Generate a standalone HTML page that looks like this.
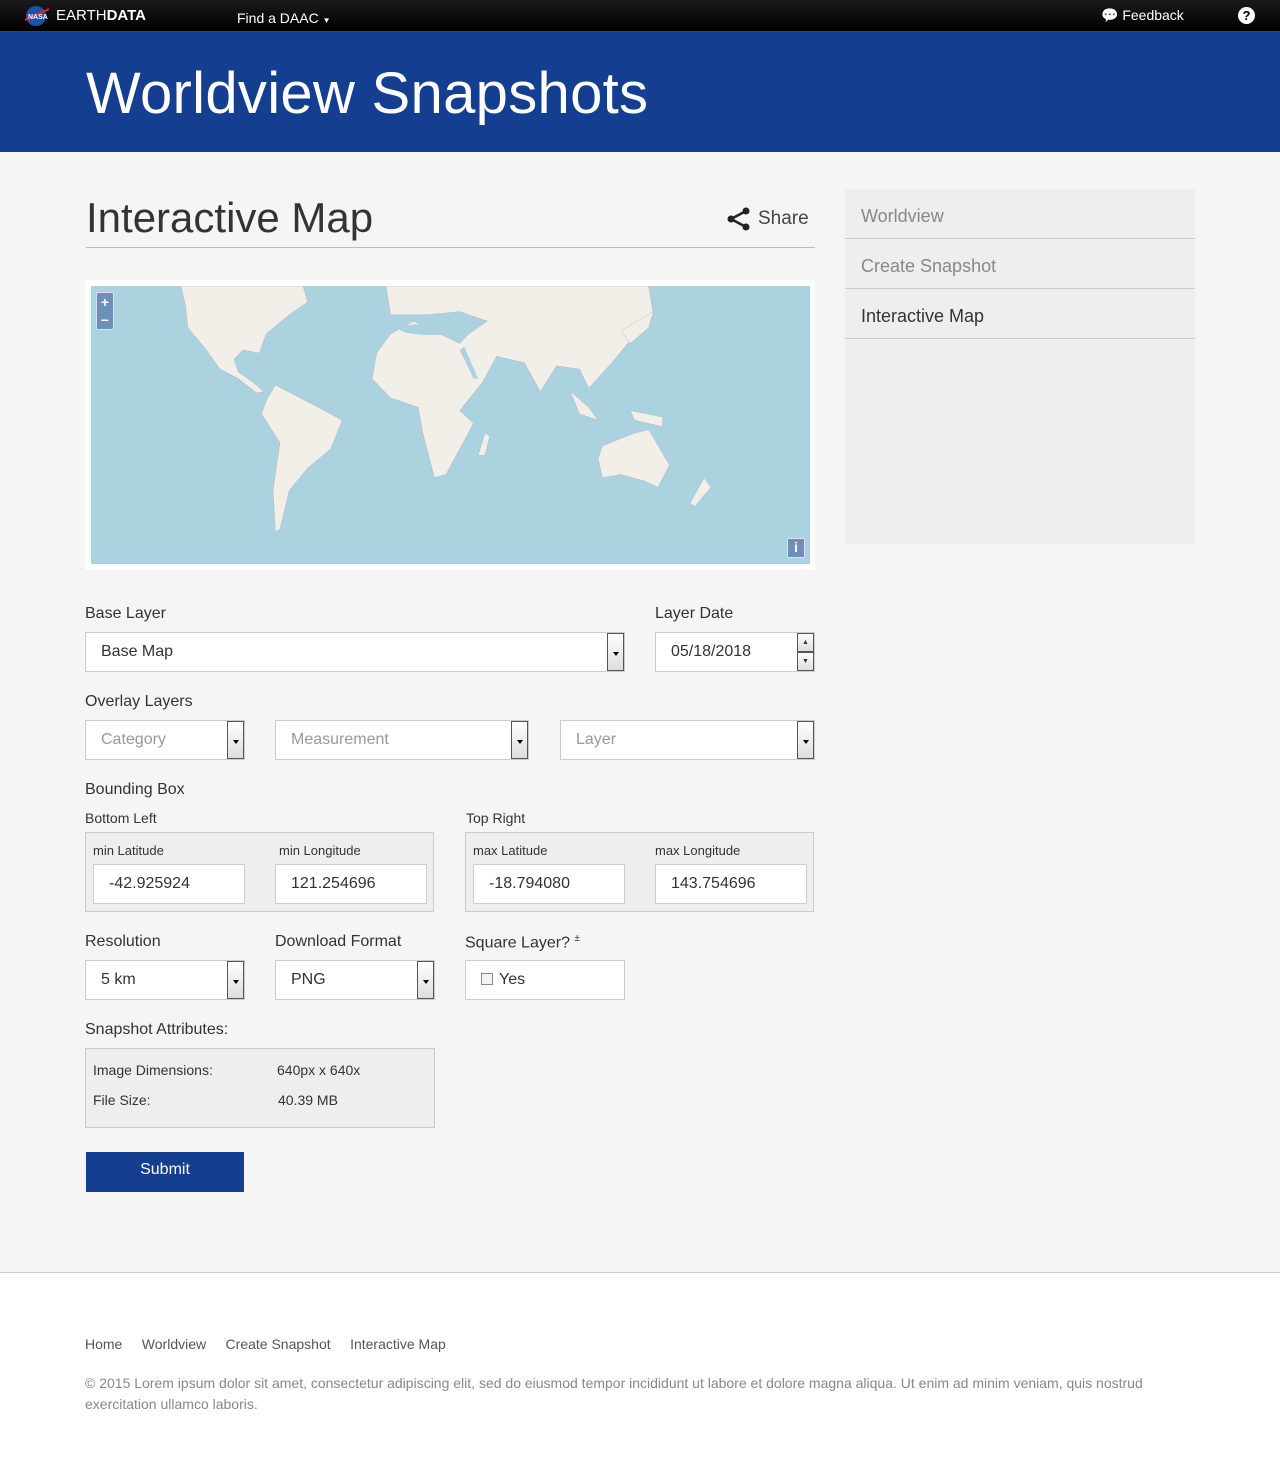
<!DOCTYPE html>
<html><head><meta charset="utf-8"><style>
*{box-sizing:border-box;margin:0;padding:0}
body{width:1280px;height:1479px;position:relative;background:#f5f5f5;font-family:"Liberation Sans","DejaVu Sans",sans-serif;color:#333;overflow:hidden}
.a{position:absolute}
.top{left:0;top:0;width:1280px;height:32px;background:linear-gradient(#1a1a1a,#000);border-bottom:1px solid #444}
.hdr{left:0;top:32px;width:1280px;height:120px;background:#143f90}
.lbl{font-size:16px;color:#333}
.inp{background:#fff;border:1px solid #ccc;height:40px;font-size:16px;padding-left:15px;line-height:38px;color:#333}
.ph{color:#999}
.dd{position:absolute;right:0;top:0;width:17px;height:38px;border:1px solid #555;background:linear-gradient(#fff,#ddd)}
.dd:after{content:"";position:absolute;left:5px;top:18px;border:3px solid transparent;border-top:4px solid #000}
.box{background:#eee;border:1px solid #ccc}
.sm{font-size:13px;color:#333}
.side{left:845px;width:350px;height:50px;border-bottom:1px solid #ccc;font-size:18px;color:#888;padding-left:16px;line-height:54px}
.foot{left:0;top:1272px;width:1280px;height:207px;background:#fff;border-top:1px solid #ccc}
</style></head><body>
<div class="a top"></div>
<svg class="a" style="left:24px;top:5px" width="26" height="22" viewBox="0 0 26 22"><circle cx="12" cy="11" r="10" fill="#2050a8"/><path d="M1 15 L25 4" stroke="#e22" stroke-width="2"/><text x="4" y="14" font-size="7" fill="#fff" font-weight="bold" font-family="Liberation Sans">NASA</text></svg>
<div class="a" style="left:56px;top:7px;color:#fff;font-size:15px">EARTH<b>DATA</b></div>
<div class="a" style="left:237px;top:10px;color:#fff;font-size:14px">Find a DAAC <span style="font-size:8px">▼</span></div>
<div class="a" style="left:1101px;top:7px;color:#fff;font-size:14px">💬 Feedback</div>
<div class="a" style="left:1238px;top:7px;width:17px;height:17px;border-radius:50%;background:#fff;color:#000;font-size:13px;font-weight:bold;text-align:center;line-height:17px">?</div>
<div class="a hdr"></div>
<div class="a" style="left:86px;top:58px;color:#fff;font-size:58px;line-height:72px;letter-spacing:0.3px">Worldview Snapshots</div>

<div class="a" style="left:86px;top:193px;font-size:42px;color:#333;line-height:50px">Interactive Map</div>
<svg class="a" style="left:726px;top:207px" width="26" height="24" viewBox="0 0 26 24"><path d="M20 4 L5 12 L20 20" stroke="#222" stroke-width="2.5" fill="none"/><circle cx="20" cy="4" r="3.5" fill="#222"/><circle cx="5" cy="12" r="3.5" fill="#222"/><circle cx="20" cy="20" r="3.5" fill="#222"/></svg>
<div class="a" style="left:758px;top:208px;font-size:19px;color:#444">Share</div>
<div class="a" style="left:86px;top:247px;width:729px;height:1px;background:#bbb"></div>

<div class="a" style="left:85px;top:280px;width:730px;height:290px;background:#fff"></div>
<svg class="a" style="left:91px;top:286px" width="719" height="278" viewBox="0 0 1560 870" preserveAspectRatio="none">
<rect width="1560" height="870" fill="#aad3df"/>
<g fill="#f2efe9" stroke="#b9a9c0" stroke-width="1">
<path d="M195 0 460 0 470 50 430 90 380 150 365 210 330 200 310 230 320 270 350 300 375 330 360 335 320 290 280 260 245 190 210 130 205 60Z"/>
<path d="M400 310 480 370 545 420 520 510 470 570 430 640 410 760 400 770 395 640 410 490 370 400 380 360Z"/>
<path d="M640 0 1210 0 1220 90 1170 170 1130 240 1080 320 1060 260 1010 250 975 330 940 240 880 220 850 300 800 390 830 430 800 510 770 590 745 600 720 460 710 380 650 350 610 290 620 210 650 150 700 110 800 180 820 150 860 110 800 80 730 90 650 90Z"/>
<path d="M1110 500 1180 460 1210 450 1255 560 1230 630 1200 610 1150 590 1110 600 1100 540Z"/>
<path d="M1150 140 1220 80 1210 130 1170 180Z"/>
<path d="M855 460 865 470 855 530 840 530Z"/>
<path d="M1330 600 1345 630 1310 690 1300 680Z"/>
<path d="M1040 330 1080 380 1100 420 1060 400Z"/>
<path d="M1170 390 1240 410 1240 440 1180 420Z"/>
</g>
<ellipse cx="740" cy="135" rx="70" ry="18" fill="#aad3df"/>
<ellipse cx="800" cy="95" rx="25" ry="10" fill="#aad3df"/>
<path d="M810 190 840 290 830 290 800 200Z" fill="#aad3df"/>
</svg>
<div class="a" style="left:96px;top:292px;width:18px;height:38px;background:#6d8fb8;border:1px solid #dde;border-radius:2px;color:#fff;font-size:14px;text-align:center;line-height:18px;font-weight:bold">+<br>−</div>
<div class="a" style="left:787px;top:538px;width:18px;height:20px;background:#6d8fb8;border:1px solid #dde;color:#fff;font-size:14px;text-align:center;font-weight:bold">i</div>

<div class="a" style="left:845px;top:189px;width:350px;height:355px;background:#eee"></div>
<div class="a side" style="top:189px">Worldview</div>
<div class="a side" style="top:239px">Create Snapshot</div>
<div class="a side" style="top:289px;color:#333">Interactive Map</div>

<div class="a lbl" style="left:85px;top:605px">Base Layer</div>
<div class="a lbl" style="left:655px;top:605px">Layer Date</div>
<div class="a inp" style="left:85px;top:632px;width:540px">Base Map<div class="dd"></div></div>
<div class="a inp" style="left:655px;top:632px;width:160px">05/18/2018
<div class="a" style="right:0;top:0;width:17px;height:19px;border:1px solid #555;background:linear-gradient(#fff,#ddd);font-size:7px;line-height:17px;text-align:center;padding:0">▲</div>
<div class="a" style="right:0;top:19px;width:17px;height:19px;border:1px solid #555;background:linear-gradient(#fff,#ddd);font-size:7px;line-height:17px;text-align:center;padding:0">▼</div></div>

<div class="a lbl" style="left:85px;top:693px">Overlay Layers</div>
<div class="a inp ph" style="left:85px;top:720px;width:160px">Category<div class="dd"></div></div>
<div class="a inp ph" style="left:275px;top:720px;width:254px">Measurement<div class="dd"></div></div>
<div class="a inp ph" style="left:560px;top:720px;width:255px">Layer<div class="dd"></div></div>

<div class="a lbl" style="left:85px;top:781px">Bounding Box</div>
<div class="a" style="left:85px;top:810px;font-size:14px">Bottom Left</div>
<div class="a" style="left:466px;top:810px;font-size:14px">Top Right</div>
<div class="a box" style="left:85px;top:832px;width:349px;height:80px"></div>
<div class="a box" style="left:465px;top:832px;width:349px;height:80px"></div>
<div class="a sm" style="left:93px;top:843px">min Latitude</div>
<div class="a sm" style="left:279px;top:843px">min Longitude</div>
<div class="a sm" style="left:473px;top:843px">max Latitude</div>
<div class="a sm" style="left:655px;top:843px">max Longitude</div>
<div class="a inp" style="left:93px;top:864px;width:152px">-42.925924</div>
<div class="a inp" style="left:275px;top:864px;width:152px">121.254696</div>
<div class="a inp" style="left:473px;top:864px;width:152px">-18.794080</div>
<div class="a inp" style="left:655px;top:864px;width:152px">143.754696</div>

<div class="a lbl" style="left:85px;top:933px">Resolution</div>
<div class="a lbl" style="left:275px;top:933px">Download Format</div>
<div class="a lbl" style="left:465px;top:933px">Square Layer? <sup style="font-size:10px">±</sup></div>
<div class="a inp" style="left:85px;top:960px;width:160px">5 km<div class="dd"></div></div>
<div class="a inp" style="left:275px;top:960px;width:160px">PNG<div class="dd"></div></div>
<div class="a inp" style="left:465px;top:960px;width:160px"><span style="display:inline-block;width:12px;height:12px;border:1px solid #888;background:#f4f4f4;vertical-align:-1px;margin-right:6px"></span>Yes</div>

<div class="a lbl" style="left:85px;top:1021px">Snapshot Attributes:</div>
<div class="a box" style="left:85px;top:1048px;width:350px;height:80px"></div>
<div class="a" style="left:93px;top:1062px;font-size:14px">Image Dimensions:</div>
<div class="a" style="left:277px;top:1062px;font-size:14px">640px x 640x</div>
<div class="a" style="left:93px;top:1092px;font-size:14px">File Size:</div>
<div class="a" style="left:278px;top:1092px;font-size:14px">40.39 MB</div>
<div class="a" style="left:86px;top:1152px;width:158px;height:40px;background:#143f90;color:#fff;font-size:16px;text-align:center;line-height:36px">Submit</div>

<div class="a foot"></div>
<div class="a" style="left:85px;top:1336px;font-size:14px;color:#555">Home&nbsp;&nbsp;&nbsp;&nbsp; Worldview&nbsp;&nbsp;&nbsp;&nbsp; Create Snapshot&nbsp;&nbsp;&nbsp;&nbsp; Interactive Map</div>
<div class="a" style="left:85px;top:1373px;width:1075px;font-size:14px;color:#888;line-height:21px">© 2015 Lorem ipsum dolor sit amet, consectetur adipiscing elit, sed do eiusmod tempor incididunt ut labore et dolore magna aliqua. Ut enim ad minim veniam, quis nostrud exercitation ullamco laboris.</div>
</body></html>
